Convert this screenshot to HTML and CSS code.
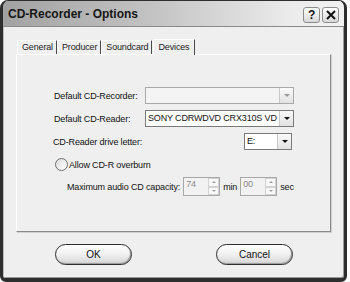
FILE: index.html
```html
<!DOCTYPE html>
<html lang="en">
  <head>
    <meta charset="UTF-8" />
    <title>CD-Recorder - Options</title>
    <link rel="stylesheet" href="styles.css">
  </head>
  <body>
    <div class="window">
      <div class="titlebar">
        <span class="title">CD-Recorder - Options</span>
        <div class="caps">
          <span class="cap">?</span>
          <span class="cap">
            <svg width="10" height="10" viewBox="0 0 10 10"><path d="M1 1 L9 9 M9 1 L1 9" stroke="#111" stroke-width="2"/></svg>
          </span>
        </div>
      </div>

      <div class="client">
        <div class="tabs">
          <span class="tab">General</span>
          <span class="tab">Producer</span>
          <span class="tab">Soundcard</span>
          <span class="tab active">Devices</span>
        </div>

        <div class="panel">
          <div class="row">
            <label class="lbl">Default CD-Recorder:</label>
            <div class="combo disabled wide">
              <span class="value"></span>
              <span class="arrow"></span>
            </div>
          </div>

          <div class="row">
            <label class="lbl">Default CD-Reader:</label>
            <div class="combo wide">
              <span class="value">SONY CDRWDVD CRX310S VD</span>
              <span class="arrow"></span>
            </div>
          </div>

          <div class="row drive">
            <label class="lbl">CD-Reader drive letter:</label>
            <div class="combo small">
              <span class="value">E:</span>
              <span class="arrow"></span>
            </div>
          </div>

          <div class="row radio-row">
            <span class="radio"></span>
            <label>Allow CD-R overburn</label>
          </div>

          <div class="row capacity">
            <label>Maximum audio CD capacity:</label>
            <div class="spin">
              <span class="value">74</span>
              <span class="spin-btns"><i class="up"></i><i class="down"></i></span>
            </div>
            <label>min</label>
            <div class="spin">
              <span class="value">00</span>
              <span class="spin-btns"><i class="up"></i><i class="down"></i></span>
            </div>
            <label>sec</label>
          </div>
        </div>

        <div class="buttons">
          <button class="btn">OK</button>
          <button class="btn">Cancel</button>
        </div>
      </div>
    </div>
  </body>
</html>
```

FILE: styles.css
```css
body {
  margin: 0;
  background: #fff;
  font-family: "Liberation Sans", Arial, sans-serif;
  font-size: 9px;
  letter-spacing: -0.15px;
  color: #111;
}

.window {
  width: 347px;
  height: 282px;
  box-sizing: border-box;
  border: 3px solid #2e2e2e;
  border-top-width: 1px;
  border-bottom-width: 4px;
  border-radius: 8px 8px 6px 6px;
  background: #efefef;
  overflow: hidden;
  box-shadow: inset 1px 0 0 #bdbdbd, inset -1px -1px 0 #9a9a9a;
}

.titlebar {
  height: 25px;
  display: flex;
  align-items: center;
  justify-content: space-between;
  padding: 0 5px 0 5px;
  background: linear-gradient(to right, #a2a2a2 0%, #c4c4c4 45%, #ececec 85%, #f2f2f2 100%);
  border-bottom: 1px solid #8a8a8a;
}

.title {
  font-weight: bold;
  font-size: 12px;
  letter-spacing: 0;
  color: #161616;
}

.caps {
  display: flex;
  gap: 2px;
  margin-top: 2px;
}

.cap {
  width: 15px;
  height: 14px;
  display: flex;
  align-items: center;
  justify-content: center;
  border: 1px solid #8c8c8c;
  border-radius: 3px;
  background: linear-gradient(#ffffff, #d8d8d8);
  font-weight: bold;
  font-size: 12px;
  color: #111;
}

.client {
  padding: 12px 13px 0 13px;
}

.tabs {
  display: flex;
  align-items: flex-end;
  height: 15px;
  padding-left: 1px;
  position: relative;
  z-index: 1;
}

.tab {
  height: 13px;
  line-height: 13px;
  padding: 0 3px 0 4px;
  border-left: 1px solid #fff;
  border-right: 1px solid #4a4a4a;
  border-top: 1px solid #fff;
  color: #222;
}

.tab.active {
  height: 15px;
  line-height: 15px;
  padding: 0 5px 0 4px;
  margin-bottom: -1px;
  margin-left: 1px;
  background: #efefef;
  border-top: 1px solid #fff;
}

.panel {
  height: 178px;
  box-sizing: border-box;
  border: 1px solid #fff;
  border-right-color: #8a8a8a;
  border-bottom-color: #8a8a8a;
  box-shadow: 1px 1px 0 #d0d0d0;
  padding: 32px 0 0 37px;
}

.row {
  display: flex;
  align-items: center;
  height: 17px;
  margin-bottom: 6px;
  white-space: nowrap;
}

.lbl {
  width: 91px;
}

.combo {
  display: flex;
  height: 17px;
  box-sizing: border-box;
  border: 1px solid #7a7a7a;
  background: #fff;
}

.combo.wide {
  width: 149px;
}

.combo.small {
  width: 48px;
  margin-left: auto;
  margin-right: 38px;
}

.combo .value {
  flex: 1;
  padding-left: 2px;
  line-height: 15px;
  white-space: nowrap;
  overflow: hidden;
}

.arrow {
  width: 13px;
  background: linear-gradient(#fafafa, #e2e2e2);
  border-left: 1px solid #c8c8c8;
  display: flex;
  align-items: center;
  justify-content: center;
}

.arrow::after {
  content: "";
  border-left: 3px solid transparent;
  border-right: 3px solid transparent;
  border-top: 3px solid #111;
}

.combo.disabled {
  background: #f4f4f4;
  border-color: #a8a8a8;
}

.combo.disabled .arrow::after {
  border-top-color: #9a9a9a;
}

.drive {
  margin-top: 1px;
  margin-left: -1px;
}

.radio-row {
  margin-top: 1px;
  margin-left: 1px;
}

.radio {
  width: 11px;
  height: 11px;
  border: 1px solid #6c6c6c;
  border-radius: 50%;
  background: linear-gradient(135deg, #dcdcdc, #fff);
  margin-right: 1px;
}

.capacity {
  margin-left: 13px;
  height: 19px;
  margin-top: -2px;
}

.spin {
  display: flex;
  width: 37px;
  height: 19px;
  box-sizing: border-box;
  border: 1px solid #a8a8a8;
  background: #f2f2f2;
  margin: 0 3px 0 3px;
}

.spin .value {
  flex: 1;
  padding: 1px 0 0 2px;
  color: #8a8a8a;
}

.spin-btns {
  width: 11px;
  display: flex;
  flex-direction: column;
}

.spin-btns i {
  flex: 1;
  display: flex;
  align-items: center;
  justify-content: center;
  border: 1px solid #d2d2d2;
  background: #f8f8f8;
}

.spin-btns i::after {
  content: "";
  border-left: 2px solid transparent;
  border-right: 2px solid transparent;
}

.spin-btns .up::after {
  border-bottom: 2px solid #a0a0a0;
}

.spin-btns .down::after {
  border-top: 2px solid #a0a0a0;
}

.buttons {
  display: flex;
  gap: 84px;
  padding-left: 39px;
  margin-top: 12px;
}

.btn {
  width: 77px;
  height: 21px;
  border: 1px solid #2e2e2e;
  border-radius: 11px;
  background: linear-gradient(#ffffff, #f0f0f0 50%, #d4d4d4);
  box-shadow: inset -1px -1px 1px #9a9a9a;
  font-family: "Liberation Sans", Arial, sans-serif;
  font-size: 10px;
  color: #111;
  padding: 0;
}
```
